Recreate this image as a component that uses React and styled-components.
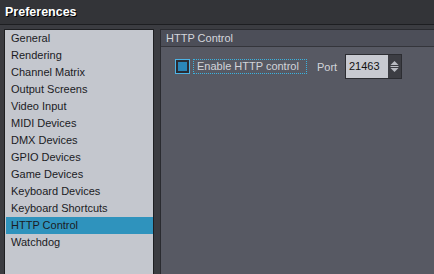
import React from "react";
import styled, { createGlobalStyle } from "styled-components";

const Global = createGlobalStyle`
  html, body { margin: 0; padding: 0; background: #3b3c41; }
  * { box-sizing: border-box; }
`;

const Window = styled.div`
  width: 434px;
  height: 274px;
  overflow: hidden;
  background: #3b3c41;
  font-family: "Liberation Sans", Arial, sans-serif;
  display: flex;
  flex-direction: column;
`;

const TitleBar = styled.div`
  height: 25px;
  flex: none;
  background: #333438;
  border-bottom: 1px solid #1d1e21;
  padding: 5px 0 0 5px;
  font-size: 12.5px;
  font-weight: bold;
  color: #ffffff;
  text-shadow: 1px 1px 0 #000;
`;

const Body = styled.div`
  flex: 1;
  display: flex;
  gap: 6px;
  padding: 4px 0 0 4px;
  min-height: 0;
`;

const List = styled.ul`
  list-style: none;
  margin: 0;
  padding: 0 0 0 1px;
  width: 150px;
  flex: none;
  height: 260px;
  background: #c4c7ce;
  border: 1px solid #1e1f22;
  border-bottom: none;
`;

const Item = styled.li`
  height: 17px;
  line-height: 17px;
  padding-left: 5px;
  font-size: 11px;
  color: #1b1b1f;
  background: ${(p) => (p.$selected ? "#2f93bd" : "transparent")};
`;

const Panel = styled.div`
  flex: 1;
  height: 260px;
  background: #575963;
  border: 1px solid #2a2b30;
  border-right: none;
  border-bottom: none;
  display: flex;
  flex-direction: column;
`;

const PanelHeader = styled.div`
  height: 17px;
  flex: none;
  background: #4c4e58;
  border-bottom: 1px solid #34353b;
  padding-left: 5px;
  font-size: 11px;
  line-height: 16px;
  color: #d4d6dc;
`;

const Row = styled.div`
  display: flex;
  align-items: center;
  padding: 7px 0 0 14px;
  height: 32px;
`;

const Check = styled.div`
  width: 15px;
  height: 15px;
  flex: none;
  border: 1px solid #4db4e6;
  padding: 2px;
  background: #2a2c33;
  margin-right: 3px;
`;

const CheckFill = styled.div`
  width: 100%;
  height: 100%;
  background: #2a86b8;
`;

const FocusLabel = styled.div`
  height: 15px;
  padding: 0 0 0 3px;
  width: 114px;
  border: 1px dotted #3ab3e0;
  font-size: 11px;
  line-height: 13px;
  color: #d2d4da;
  white-space: nowrap;
`;

const PortLabel = styled.span`
  font-size: 11px;
  color: #d2d4da;
  margin: 0 0 0 10px;
  width: 28px;
`;

const Spin = styled.div`
  display: flex;
  height: 25px;
  width: 57px;
  border: 1px solid #2c2d32;
`;

const SpinInput = styled.div`
  flex: 1;
  background: #c8cad1;
  font-size: 11px;
  color: #111;
  line-height: 23px;
  padding-left: 3px;
`;

const SpinButtons = styled.div`
  width: 13px;
  background: #3c3d43;
  display: flex;
  align-items: center;
  justify-content: center;
`;

const items = [
  "General",
  "Rendering",
  "Channel Matrix",
  "Output Screens",
  "Video Input",
  "MIDI Devices",
  "DMX Devices",
  "GPIO Devices",
  "Game Devices",
  "Keyboard Devices",
  "Keyboard Shortcuts",
  "HTTP Control",
  "Watchdog",
];

export default function App() {
  return (
    <Window>
      <Global />
      <TitleBar>Preferences</TitleBar>
      <Body>
        <List>
          {items.map((t) => (
            <Item key={t} $selected={t === "HTTP Control"}>
              {t}
            </Item>
          ))}
        </List>
        <Panel>
          <PanelHeader>HTTP Control</PanelHeader>
          <Row>
            <Check>
              <CheckFill />
            </Check>
            <FocusLabel>Enable HTTP control</FocusLabel>
            <PortLabel>Port</PortLabel>
            <Spin>
              <SpinInput>21463</SpinInput>
              <SpinButtons>
                <svg width="9" height="13" viewBox="0 0 9 13">
                  <path d="M4.5 1 L8.5 5 L0.5 5 Z" fill="#b9bbc2" />
                  <rect x="0.5" y="6" width="8" height="1" fill="#b9bbc2" />
                  <path d="M0.5 8 L8.5 8 L4.5 12 Z" fill="#b9bbc2" />
                </svg>
              </SpinButtons>
            </Spin>
          </Row>
        </Panel>
      </Body>
    </Window>
  );
}
